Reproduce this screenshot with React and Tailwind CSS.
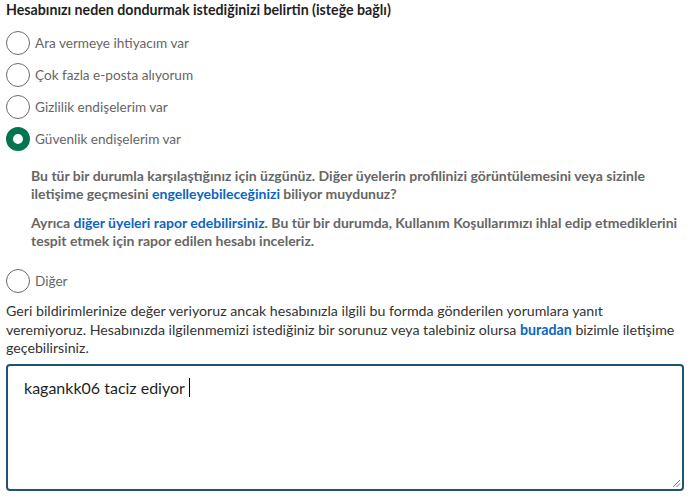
import React from "react";

function Radio({ label, checked }) {
  return (
    <div className="flex h-[32px] items-center">
      {checked ? (
        <span className="box-border h-[24px] w-[24px] shrink-0 rounded-full border-[7px] border-[#01754f] bg-white" />
      ) : (
        <span className="box-border h-[24px] w-[24px] shrink-0 rounded-full border-[1.5px] border-[#6b6b6b] bg-white" />
      )}
      <span className="ml-[5px] text-[13.6px] leading-[18px] text-[#666666]">{label}</span>
    </div>
  );
}

export default function App() {
  return (
    <div
      className="h-[499px] w-[698px] overflow-hidden bg-white px-[6px] pt-[1px]"
      style={{ fontFamily: 'Lato, "Open Sans", sans-serif' }}
    >
      <div className="text-[14.2px] font-bold leading-[18px] text-[#1f1f1f]">
        Hesabınızı neden dondurmak istediğinizi belirtin (isteğe bağlı)
      </div>
      <div className="mt-[8px]">
        <Radio label="Ara vermeye ihtiyacım var" />
        <Radio label="Çok fazla e-posta alıyorum" />
        <Radio label="Gizlilik endişelerim var" />
        <Radio label="Güvenlik endişelerim var" checked />
      </div>
      <div className="mt-[12px] pl-[25px] pr-[4px] text-[14px] font-bold leading-[18px] text-[#666666]">
        <p>
          Bu tür bir durumla karşılaştığınız için üzgünüz. Diğer üyelerin profilinizi görüntülemesini veya sizinle
          iletişime geçmesini <span className="text-[#0a66c2]">engelleyebileceğinizi</span> biliyor muydunuz?
        </p>
        <p className="mt-[11px]">
          Ayrıca <span className="text-[#0a66c2]">diğer üyeleri rapor edebilirsiniz</span>. Bu tür bir durumda,
          Kullanım Koşullarımızı ihlal edip etmediklerini tespit etmek için rapor edilen hesabı inceleriz.
        </p>
      </div>
      <div className="mt-[15px]">
        <Radio label="Diğer" />
      </div>
      <p className="mt-[5px] w-[674px] text-[14.2px] leading-[18.5px] text-[#333333]">
        Geri bildirimlerinize değer veriyoruz ancak hesabınızla ilgili bu formda gönderilen yorumlara yanıt
        veremiyoruz. Hesabınızda ilgilenmemizi istediğiniz bir sorunuz veya talebiniz olursa{" "}
        <span className="font-bold text-[#0a66c2]">buradan</span> bizimle iletişime geçebilirsiniz.
      </p>
      <div className="relative mt-[6px] box-border h-[127px] w-[678px] rounded-[4px] border-2 border-[#1d5570] px-[16px] pt-[11px]">
        <div className="flex items-center text-[16px] leading-[22px] text-[#1f1f1f]">
          <span className="whitespace-pre">kagankk06 taciz ediyor </span>
          <span className="inline-block h-[19px] w-[1px] bg-black" />
        </div>
        <svg className="absolute bottom-[1px] right-[1px]" width="9" height="9" viewBox="0 0 9 9">
          <line x1="1" y1="8" x2="8" y2="1" stroke="#777" strokeWidth="1" />
          <line x1="4.5" y1="8" x2="8" y2="4.5" stroke="#777" strokeWidth="1" />
        </svg>
      </div>
    </div>
  );
}
